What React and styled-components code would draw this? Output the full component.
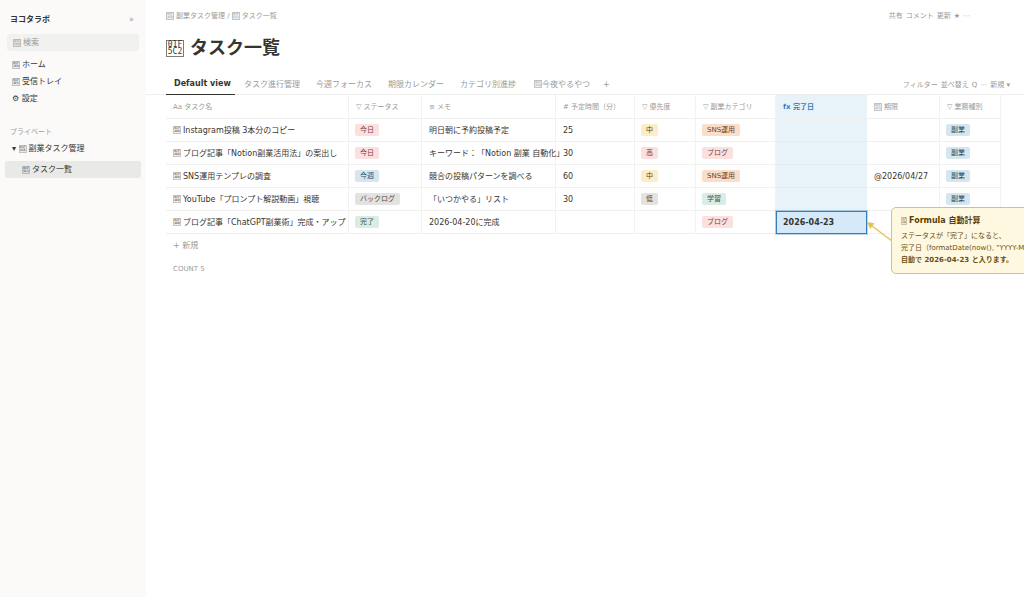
import React from "react";
import styled, { createGlobalStyle } from "styled-components";

const GlobalStyle = createGlobalStyle`
  * {
    box-sizing: border-box;
  }
  body {
    margin: 0;
    overflow: hidden;
    background-color: #ffffff;
    color: #37352f;
    font-family: "DejaVu Sans", "Noto Sans CJK JP", sans-serif;
    font-size: 8px;
    line-height: 12px;
    text-spacing-trim: space-all;
  }
  button,
  input {
    font: inherit;
    color: inherit;
    border: none;
    background: none;
    padding: 0;
    margin: 0;
  }
  a {
    color: inherit;
    text-decoration: none;
  }
`;

const tabs = [
  "タスク進行管理",
  "今週フォーカス",
  "期限カレンダー",
  "カテゴリ別進捗",
];

const columns = [
  { label: "Aa タスク名", width: 183 },
  { label: "▽ ステータス", width: 73 },
  { label: "≡ メモ", width: 134 },
  { label: "# 予定時間（分）", width: 79 },
  { label: "▽ 優先度", width: 61 },
  { label: "▽ 副業カテゴリ", width: 80 },
  { label: "fx 完了日", width: 91, formula: true },
  { label: "期限", width: 73, code: "01F4C5" },
  { label: "▽ 業務種別", width: 61 },
];

const rows = [
  {
    name: "Instagram投稿 3本分のコピー",
    status: ["今日", "red"],
    memo: "明日朝に予約投稿予定",
    time: "25",
    priority: ["中", "yellow"],
    category: ["SNS運用", "orange"],
    type: ["副業", "blue"],
  },
  {
    name: "ブログ記事「Notion副業活用法」の案出し",
    status: ["今日", "red"],
    memo: "キーワード：「Notion 副業 自動化」",
    time: "30",
    priority: ["高", "red"],
    category: ["ブログ", "red"],
    type: ["副業", "blue"],
  },
  {
    name: "SNS運用テンプレの調査",
    status: ["今週", "blue"],
    memo: "競合の投稿パターンを調べる",
    time: "60",
    priority: ["中", "yellow"],
    category: ["SNS運用", "orange"],
    due: "@2026/04/27",
    type: ["副業", "blue"],
  },
  {
    name: "YouTube「プロンプト解説動画」視聴",
    status: ["バックログ", "gray"],
    memo: "「いつかやる」リスト",
    time: "30",
    priority: ["低", "gray"],
    category: ["学習", "green"],
    type: ["副業", "blue"],
  },
  {
    name: "ブログ記事「ChatGPT副業術」完成・アップ",
    status: ["完了", "green"],
    memo: "2026-04-20に完成",
    category: ["ブログ", "red"],
    done: "2026-04-23",
  },
];

const tagColors = {
  red: ["#fbe0e0", "#7b3a3a"],
  blue: ["#d6e6ef", "#2b4a5e"],
  gray: ["#e2e2e0", "#4b4a46"],
  green: ["#dbece6", "#2f5b4c"],
  yellow: ["#fdecc8", "#5c4322"],
  orange: ["#fadec9", "#6b4226"],
};

const renderTag = (tag) => tag && <Tag $color={tag[1]}>{tag[0]}</Tag>;

// code point box, half of the digits on each line
function Glyph({ code, large }) {
  const half = code.length / 2;
  return (
    <GlyphBox $large={large} $narrow={half === 2} aria-hidden="true">
      <span>{code.slice(0, half)}</span>
      <span>{code.slice(half)}</span>
    </GlyphBox>
  );
}

function Sidebar() {
  return (
    <SidebarWrap>
      <Workspace>
        <strong>ヨコタラボ</strong>
        <CollapseButton aria-label="サイドバーを閉じる">»</CollapseButton>
      </Workspace>
      <SearchBox>
        <Glyph code="01F50D" />
        <input type="search" placeholder="検索" aria-label="検索" />
      </SearchBox>
      <nav>
        <NavLink href="#home">
          <Glyph code="01F3E0" />
          ホーム
        </NavLink>
        <NavLink href="#inbox">
          <Glyph code="01F4E5" />
          受信トレイ
        </NavLink>
        <NavLink href="#settings">⚙ 設定</NavLink>
        <SectionLabel>プライベート</SectionLabel>
        <NavLink href="#side">
          ▾ <Glyph code="01F4CB" />
          副業タスク管理
        </NavLink>
        <ActiveLink href="#tasks">
          <Glyph code="01F5C2" />
          タスク一覧
        </ActiveLink>
      </nav>
    </SidebarWrap>
  );
}

function Callout() {
  return (
    <CalloutWrap>
      <Arrow width="26" height="24" viewBox="0 0 26 24" aria-hidden="true">
        <path d="M25 20 L5 5" stroke="#e3c350" strokeWidth="1.4" />
        <path d="M0 1 L7.5 2.3 L3.2 8 Z" fill="#e3c350" />
      </Arrow>
      <CalloutBox>
        <CalloutTitle>
          <Glyph code="2728" />
          Formula 自動計算
        </CalloutTitle>
        <p>ステータスが「完了」になると、</p>
        <p>完了日（formatDate(now(), "YYYY-MM-DD")）に</p>
        <p>
          <strong>自動で 2026-04-23 と入ります。</strong>
        </p>
      </CalloutBox>
    </CalloutWrap>
  );
}

function TaskTable() {
  return (
    <Table>
      <colgroup>
        {columns.map((col) => (
          <Col key={col.label} $width={col.width} />
        ))}
      </colgroup>
      <thead>
        <tr>
          {columns.map((col) => (
            <Th key={col.label} $formula={col.formula}>
              {col.code && <Glyph code={col.code} />}
              {col.label}
            </Th>
          ))}
        </tr>
      </thead>
      <tbody>
        {rows.map((row) => (
          <tr key={row.name}>
            <Td>
              <Glyph code="01F4DD" />
              {row.name}
            </Td>
            <Td $tag>{renderTag(row.status)}</Td>
            <Td>{row.memo}</Td>
            <Td>{row.time}</Td>
            <Td $tag>{renderTag(row.priority)}</Td>
            <Td $tag>{renderTag(row.category)}</Td>
            {row.done ? (
              <DoneTd>
                {row.done}
                <Callout />
              </DoneTd>
            ) : (
              <FormulaTd />
            )}
            <Td>{row.due}</Td>
            <Td $tag>{renderTag(row.type)}</Td>
          </tr>
        ))}
      </tbody>
    </Table>
  );
}

export default function App() {
  return (
    <Page>
      <GlobalStyle />
      <Sidebar />
      <Main>
        <TopBar>
          <Breadcrumb>
            <a href="#side">
              <Glyph code="01F4CB" />
              副業タスク管理
            </a>
            {" / "}
            <a href="#tasks">
              <Glyph code="01F5C2" />
              タスク一覧
            </a>
          </Breadcrumb>
          <Actions>
            <button>共有</button>
            <button>コメント</button>
            <button>更新</button>
            <button aria-label="お気に入り">★</button>
            <button aria-label="メニュー">⋯</button>
          </Actions>
        </TopBar>
        <Title>
          <Glyph code="01F5C2" large />
          タスク一覧
        </Title>
        <TabBar>
          <ActiveTab>Default view</ActiveTab>
          {tabs.map((tab) => (
            <Tab key={tab}>{tab}</Tab>
          ))}
          <TonightTab>
            <Glyph code="01F319" />
            今夜やるやつ
          </TonightTab>
          <AddTab aria-label="ビューを追加">+</AddTab>
          <Actions>
            <button>フィルター</button>
            <button>並べ替え</button>
            <button aria-label="検索">Q</button>
            <button aria-label="その他">⋯</button>
            <button>新規 ▾</button>
          </Actions>
        </TabBar>
        <TaskTable />
        <NewButton>+ 新規</NewButton>
        <Count>COUNT 5</Count>
      </Main>
    </Page>
  );
}

const Page = styled.div`
  display: flex;
  min-height: 100vh;
  overflow: hidden;
`;

const GlyphBox = styled.span`
  display: inline-flex;
  flex-direction: column;
  align-items: center;
  justify-content: center;
  width: ${(props) => (props.$large ? 18 : props.$narrow ? 6 : 8)}px;
  height: ${(props) => (props.$large ? 17 : 8)}px;
  margin-right: ${(props) => (props.$large ? 6 : 2)}px;
  border: 1px solid ${(props) => (props.$large ? "#7d7c78" : "#8886")};
  background-color: ${(props) => (props.$large ? "transparent" : "#8882")};
  font-family: "DejaVu Sans Mono", monospace;
  font-size: ${(props) => (props.$large ? 8 : 3)}px;
  font-weight: normal;
  line-height: ${(props) => (props.$large ? 7 : 3)}px;
  vertical-align: middle;
`;

const SidebarWrap = styled.aside`
  flex: 0 0 146px;
  background-color: #fbfaf9;
  padding: 14px 5px;
`;

const Workspace = styled.div`
  display: flex;
  justify-content: space-between;
  padding: 0 7px 0 5px;
`;

const CollapseButton = styled.button`
  color: #9b9a97;
`;

const SearchBox = styled.label`
  display: flex;
  align-items: center;
  height: 17px;
  margin: 8px 2px 5px;
  padding: 0 6px;
  border-radius: 3px;
  background-color: #f1f1ef;
  color: #9b9a97;
  input {
    flex: 1;
    min-width: 0;
    outline: none;
  }
  input::placeholder {
    color: #9b9a97;
    opacity: 1;
  }
`;

const NavLink = styled.a`
  display: block;
  height: 17px;
  padding: 0 7px;
  line-height: 17px;
  border-radius: 2px;
`;

const ActiveLink = styled(NavLink)`
  margin-top: 4px;
  padding-left: 17px;
  background-color: #e9e9e7;
`;

const SectionLabel = styled.div`
  margin: 19px 5px 2px;
  font-size: 7px;
  color: #9b9a97;
`;

const Main = styled.main`
  flex: 1;
  min-width: 0;
`;

const TopBar = styled.header`
  display: flex;
  justify-content: space-between;
  padding: 10px 54px 0 20px;
  font-size: 7px;
  color: #9b9a97;
`;

const Breadcrumb = styled.nav`
  white-space: pre;
`;

const Actions = styled.div`
  display: flex;
  gap: 3px;
  margin-left: auto;
  font-size: 7px;
`;

const Title = styled.h1`
  display: flex;
  align-items: center;
  margin: 12px 20px 13px;
  font-size: 18px;
  line-height: 28px;
`;

const TabBar = styled.div`
  display: flex;
  align-items: center;
  height: 20px;
  padding: 0 14px 0 20px;
  border-bottom: 1px solid #eeeeec;
  color: #9b9a97;
`;

const Tab = styled.button`
  flex: 0 0 72px;
  height: 20px;
  padding-left: 9px;
  text-align: left;
  white-space: nowrap;
`;

const ActiveTab = styled(Tab)`
  flex-basis: 69px;
  padding-left: 8px;
  border-bottom: 1px solid #37352f;
  color: #37352f;
  font-weight: bold;
`;

const TonightTab = styled(Tab)`
  padding-left: 11px;
  ${GlyphBox} {
    margin-right: 0;
  }
`;

const AddTab = styled.button`
  margin-left: 8px;
`;

const Table = styled.table`
  width: 835px;
  margin-left: 20px;
  table-layout: fixed;
  border-collapse: separate;
  border-spacing: 0;
`;

const Col = styled.col`
  width: ${(props) => props.$width}px;
`;

const Th = styled.th`
  height: 24px;
  padding: 0 7px;
  border-right: 1px solid #f3f2f0;
  border-bottom: 1px solid #f0f0ee;
  background-color: ${(props) => (props.$formula ? "#e7f3f9" : "transparent")};
  color: ${(props) => (props.$formula ? "#337ebd" : "#9b9a97")};
  font-size: 7px;
  font-weight: ${(props) => (props.$formula ? "bold" : "normal")};
  text-align: left;
  white-space: nowrap;
`;

const Td = styled.td`
  height: 23px;
  padding: ${(props) => (props.$tag ? "0 6px" : "1px 7px 0")};
  border-right: 1px solid #f3f2f0;
  border-bottom: 1px solid #f0f0ee;
  white-space: nowrap;
`;

const FormulaTd = styled(Td)`
  border-right-color: #e7f3f9;
  border-bottom-color: #e0ecf2;
  background-color: #e7f3f9;
`;

const DoneTd = styled(Td)`
  position: relative;
  border: 1px solid #337ebd;
  padding-left: 6px;
  background-color: #d6e9f8;
  box-shadow: 0 0 0 1px #337ebd55;
  font-weight: bold;
`;

const Tag = styled.span`
  display: inline-block;
  padding: 0 5px;
  border-radius: 2px;
  background-color: ${(props) => tagColors[props.$color][0]};
  color: ${(props) => tagColors[props.$color][1]};
  font-size: 7px;
  line-height: 12px;
  vertical-align: middle;
`;

const CalloutWrap = styled.div`
  position: absolute;
  top: -5px;
  left: 100%;
  z-index: 1;
  display: flex;
  font-weight: normal;
`;

const Arrow = styled.svg`
  margin: 14px -2px 0 1px;
  fill: none;
`;

const CalloutBox = styled.div`
  padding: 6px 9px 7px;
  border: 1px solid #e3c350;
  border-radius: 5px;
  background-color: #fff8e1;
  color: #6b4f10;
  font-size: 7px;
  p {
    margin: 0;
    line-height: 12px;
  }
`;

const CalloutTitle = styled.h2`
  margin: 0 0 2px;
  font-size: 8px;
  line-height: 14px;
  color: #5a4008;
`;

const NewButton = styled.button`
  display: block;
  margin: 6px 27px 11px;
  color: #9b9a97;
`;

const Count = styled.div`
  margin: 0 27px;
  font-size: 7px;
  color: #9b9a97;
`;
